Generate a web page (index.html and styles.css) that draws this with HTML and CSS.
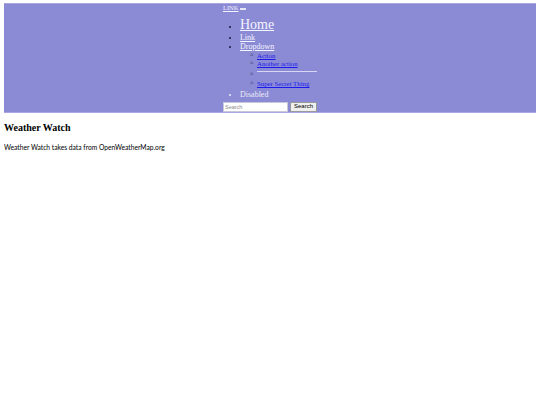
FILE: index.html
```html
<!DOCTYPE html>
<html>
<head>
<meta charset="utf-8">
<title>Weather Watch</title>
<link rel="stylesheet" href="styles.css">
</head>
<body>
<nav class="navbar">
  <div class="nav-inner">
    <div class="brand-row"><a class="brand" href="#">LINK</a> <span class="toggler"></span></div>
    <ul class="nav-list">
      <li class="home-item"><a class="home" href="#">Home</a></li>
      <li><a href="#">Link</a></li>
      <li><a href="#">Dropdown</a>
        <ul class="dropdown">
          <li><a href="#">Action</a></li>
          <li><a href="#">Another action</a></li>
          <li><hr class="divider"></li>
          <li><a href="#">Super Secret Thing</a></li>
        </ul>
      </li>
      <li class="disabled">Disabled</li>
    </ul>
    <form class="search">
      <input class="search-input" type="text" placeholder="Search">
      <button class="search-btn" type="button">Search</button>
    </form>
  </div>
</nav>
<h3 class="title">Weather Watch</h3>
<p class="info">Weather Watch takes data from OpenWeatherMap.org</p>
</body>
</html>
```
FILE: styles.css
```css
html, body {
  background: #ffffff;
}
body {
  margin: 3px 4px;
  font-family: "Liberation Serif", serif;
  font-size: 8px;
  color: #000;
}
.navbar {
  margin: 0 -1px;
  background: #8b8ad4;
  border: 1px solid #aaa6e2;
  display: flex;
  justify-content: center;
}
.nav-inner {
  display: flex;
  flex-direction: column;
}
.brand-row {
  font-size: 6.5px;
  line-height: 8px;
}
.brand {
  color: #f2f2ff;
}
.toggler {
  display: inline-block;
  width: 6px;
  height: 2px;
  background: #e4e4f4;
  vertical-align: baseline;
}
.nav-list {
  margin: 7px 0 0 0;
  padding-left: 17px;
  color: #1a1a40;
  line-height: 9px;
}
.nav-list li::marker {
  font-size: 7px;
}
.nav-list a {
  color: #f5f5ff;
}
.home-item {
  line-height: 12px;
}
.nav-list .home {
  font-size: 14px;
}
.dropdown {
  margin: 1px 0 2px 0;
  padding-left: 17px;
  font-size: 6.8px;
  line-height: 7.6px;
}
.dropdown li {
  list-style-type: none;
}
.dropdown li::marker {
  content: "\25E6  ";
  font-family: "DejaVu Sans", sans-serif;
  font-size: 8.5px;
  line-height: 7px;
  color: #1a1a40;
}
.nav-list .dropdown a {
  color: #1a1aee;
}
.divider {
  margin: 4px 0 2px 0;
  border: none;
  border-top: 1px solid #d8d6f2;
  width: 60px;
}
.disabled {
  color: #ececf6;
}
.search {
  margin: 3px 0 0 0;
  display: flex;
  gap: 2px;
}
.search-input {
  width: 61px;
  height: 8px;
  padding: 0 1px;
  border: 1px solid #c8c8d8;
  font-family: "Liberation Sans", sans-serif;
  font-size: 5.5px;
}
.search-input::placeholder {
  color: #8a8a8a;
}
.search-btn {
  height: 10px;
  padding: 0 3px;
  border: 1px solid #999;
  background: #efefef;
  font-family: "Liberation Sans", sans-serif;
  font-size: 6px;
  line-height: 7px;
}
.title {
  margin: 9px 0 0 0;
  font-size: 10px;
}
.info {
  margin: 10px 0 0 0;
  font-family: Lato, sans-serif;
  font-size: 6.7px;
}
```
